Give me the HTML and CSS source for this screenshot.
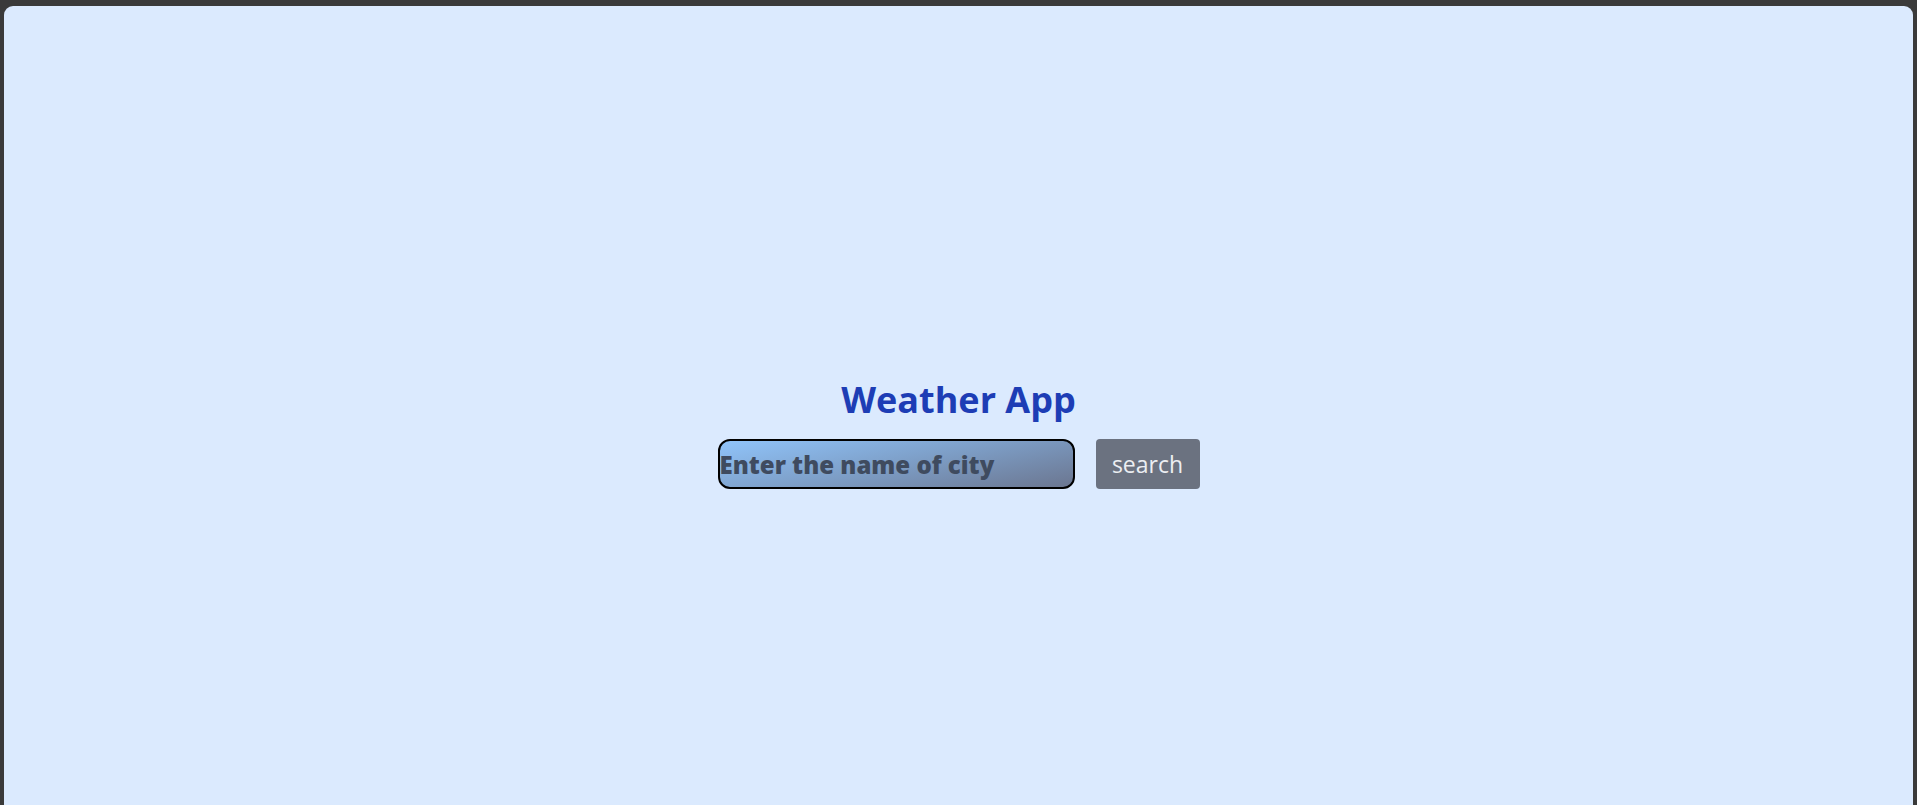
FILE: index.html
```html
<!DOCTYPE html>
<html lang="en">
<head>
<meta charset="utf-8">
<title>Weather App</title>
<link rel="stylesheet" href="styles.css">
</head>
<body>
<div class="frame">
  <main class="app">
    <h1 class="title">Weather App</h1>
    <form class="search-row" onsubmit="return false">
      <input class="city-input" type="text" placeholder="Enter the name of city">
      <button class="search-btn" type="submit">search</button>
    </form>
  </main>
</div>
</body>
</html>
```

FILE: styles.css
```css
html, body {
  margin: 0;
  padding: 0;
  height: 100%;
}
body {
  background: #3a3a3a;
  padding-top: 6px;
  padding-left: 4px;
  padding-right: 4px;
  box-sizing: border-box;
  font-family: "Open Sans", "Noto Sans", sans-serif;
}
.frame {
  height: 100%;
  background: #dbeafe;
  border-radius: 9px 9px 0 0;
  display: flex;
  flex-direction: column;
  align-items: center;
}
.app {
  padding-top: 370px;
  display: flex;
  flex-direction: column;
  align-items: center;
}
.title {
  margin: 0;
  font-size: 36px;
  line-height: 48px;
  font-weight: 700;
  color: #1d3db5;
}
.search-row {
  margin-top: 15px;
  display: flex;
  gap: 21px;
  align-items: center;
}
.city-input {
  box-sizing: border-box;
  width: 357px;
  height: 50px;
  border: 2px solid #000;
  border-radius: 12px;
  padding: 0;
  background: linear-gradient(168deg, #90c4fa 0%, #7fa2cc 45%, #6b7690 100%);
  font-family: inherit;
  font-size: 24px;
  font-weight: 800;
  color: #374151;
  outline: none;
}
.city-input::placeholder {
  color: #3f4b5f;
  opacity: 1;
}
.search-btn {
  box-sizing: border-box;
  width: 104px;
  height: 50px;
  border: none;
  border-radius: 4px;
  background: #6b7280;
  color: #eceef2;
  font-family: inherit;
  font-size: 23px;
  padding: 0;
  cursor: pointer;
}
```
